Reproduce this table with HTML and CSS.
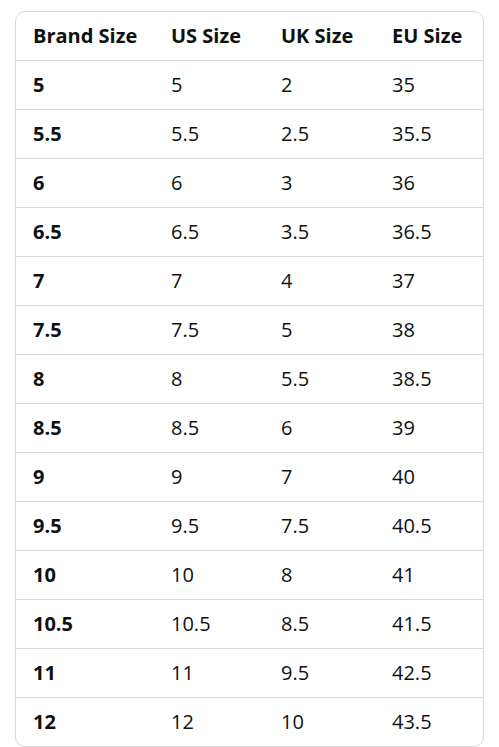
FILE: index.html
```html
<!DOCTYPE html>
<html lang="en">
<head>
    <meta charset="utf-8">
    <title>Size Chart</title>
    <link rel="stylesheet" href="styles.css">
</head>
<body>
    <div class="size-chart">
        <table class="size-table">
            <colgroup>
                <col class="col-brand">
                <col class="col-us">
                <col class="col-uk">
                <col class="col-eu">
            </colgroup>
            <thead>
                <tr>
                    <th>Brand Size</th>
                    <th>US Size</th>
                    <th>UK Size</th>
                    <th>EU Size</th>
                </tr>
            </thead>
            <tbody>
                <tr><th>5</th><td>5</td><td>2</td><td>35</td></tr>
                <tr><th>5.5</th><td>5.5</td><td>2.5</td><td>35.5</td></tr>
                <tr><th>6</th><td>6</td><td>3</td><td>36</td></tr>
                <tr><th>6.5</th><td>6.5</td><td>3.5</td><td>36.5</td></tr>
                <tr><th>7</th><td>7</td><td>4</td><td>37</td></tr>
                <tr><th>7.5</th><td>7.5</td><td>5</td><td>38</td></tr>
                <tr><th>8</th><td>8</td><td>5.5</td><td>38.5</td></tr>
                <tr><th>8.5</th><td>8.5</td><td>6</td><td>39</td></tr>
                <tr><th>9</th><td>9</td><td>7</td><td>40</td></tr>
                <tr><th>9.5</th><td>9.5</td><td>7.5</td><td>40.5</td></tr>
                <tr><th>10</th><td>10</td><td>8</td><td>41</td></tr>
                <tr><th>10.5</th><td>10.5</td><td>8.5</td><td>41.5</td></tr>
                <tr><th>11</th><td>11</td><td>9.5</td><td>42.5</td></tr>
                <tr><th>12</th><td>12</td><td>10</td><td>43.5</td></tr>
            </tbody>
        </table>
    </div>
</body>
</html>
```

FILE: styles.css
```css
body {
    margin: 0;
    padding: 11px 15px 0 15px;
    background-color: #ffffff;
    color: #0f1111;
    font-family: "Open Sans", "Noto Sans", sans-serif;
}

.size-chart {
    width: 469px;
    border: 1px solid #d5d9d9;
    border-radius: 10px;
    overflow: hidden;
    box-sizing: border-box;
}

.size-table {
    width: 100%;
    border-collapse: collapse;
    table-layout: fixed;
    font-size: 20px;
}

.col-brand { width: 138px; }
.col-us { width: 110px; }
.col-uk { width: 111px; }
.col-eu { width: auto; }

.size-table th,
.size-table td {
    height: 46px;
    padding: 0 0 2px 17px;
    text-align: left;
    vertical-align: middle;
    border-bottom: 1px solid #d5d9d9;
    white-space: nowrap;
}

.size-table th {
    font-weight: 700;
}

.size-table td {
    font-weight: 400;
}

.size-table tbody tr:last-child th,
.size-table tbody tr:last-child td {
    border-bottom: none;
}
```
